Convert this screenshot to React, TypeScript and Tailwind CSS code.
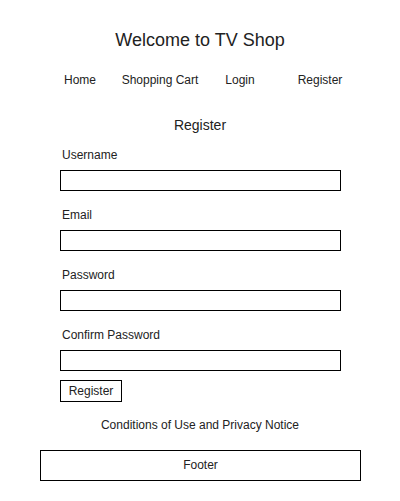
import React from "react";

const Field = ({ label, first }: { label: string; first?: boolean }) => (
  <div className={`flex flex-col ${first ? "mt-[15px]" : "mt-[17px]"}`}>
    <div className="pl-[62px] text-[12px] leading-[14px]">{label}</div>
    <div className="ml-[60px] mt-[8px] h-[21px] w-[281px] border border-black bg-white" />
  </div>
);

export default function App() {
  return (
    <div
      className="w-[400px] h-[501px] bg-white text-[#222]"
      style={{ fontFamily: '"Liberation Sans", Arial, sans-serif' }}
    >
      <div className="pt-[30px] text-center text-[18px] leading-[20px]">Welcome to TV Shop</div>
      <nav className="mx-[40px] mt-[23px] grid grid-cols-4 text-center text-[12px] leading-[14px]">
        <span>Home</span>
        <span>Shopping Cart</span>
        <span>Login</span>
        <span>Register</span>
      </nav>
      <div className="mt-[30px] text-center text-[14px] leading-[16px]">Register</div>
      <Field label="Username" first />
      <Field label="Email" />
      <Field label="Password" />
      <Field label="Confirm Password" />
      <div className="ml-[60px] mt-[9px] flex h-[22px] w-[62px] items-center justify-center border border-black text-[12px] leading-[14px]">
        Register
      </div>
      <div className="mt-[16px] text-center text-[12px] leading-[14px]">
        Conditions of Use and Privacy Notice
      </div>
      <div className="ml-[40px] mt-[18px] flex h-[31px] w-[321px] items-center justify-center border border-black pb-[1px] text-[12px] leading-[14px]">
        Footer
      </div>
    </div>
  );
}
